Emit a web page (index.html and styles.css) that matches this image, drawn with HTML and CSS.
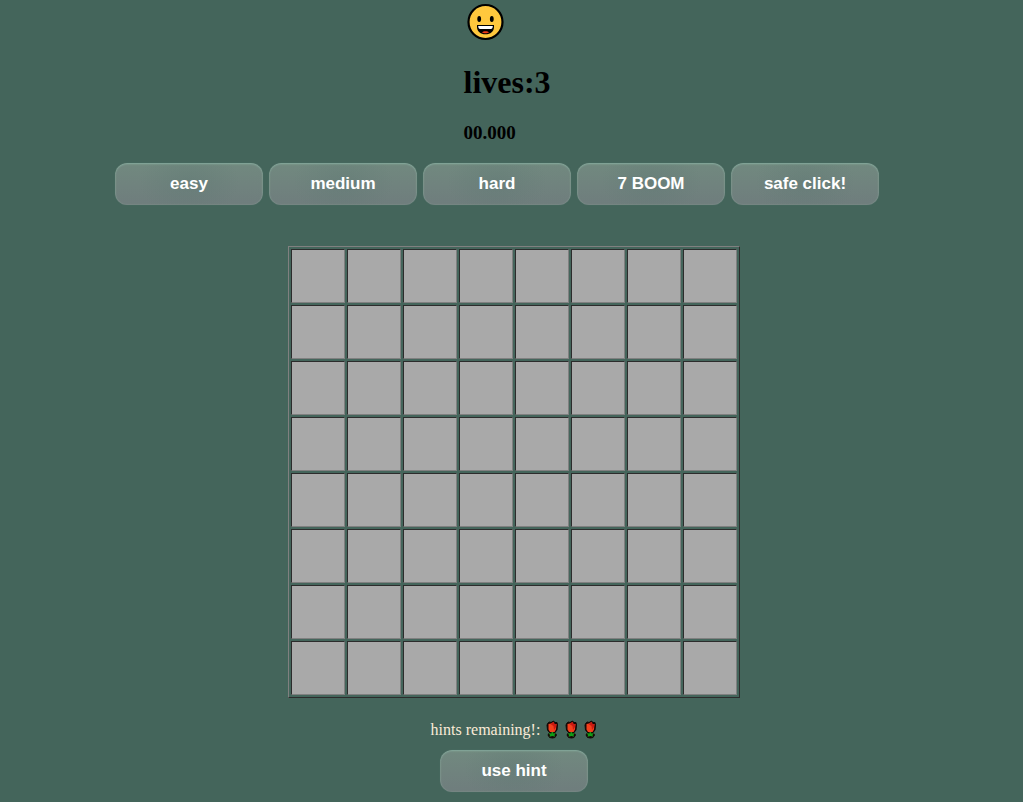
FILE: index.html
```
<!DOCTYPE html>
<html lang="en">
<head>
<meta charset="utf-8">
<title>Minesweeper</title>
<link rel="stylesheet" href="styles.css">
</head>
<body>
<svg class="symbols" aria-hidden="true">
  <symbol id="rose" viewBox="0 0 13 19">
    <path d="M3.500 2 5 2.500 7.500 1 9 2.500 11 2.500 11.500 5 11 10 9 12.500 10.500 15 9 17.500 6.500 18 3.500 17.500 2 15 3.500 12.500 1.500 10 1 5 2 3Z" fill="#140806" stroke="#140806" stroke-linejoin="round"/>
    <path d="M2.500 4 5 3.500 7.500 2 8.500 4 10.500 4 10 9.500 8.500 12H4L2.500 9.500Z" fill="#f2401c"/>
    <path d="M4.500 4 7.500 2 8.500 4 10.500 4 10 7 8 10 7.500 6Z" fill="#c91a12"/>
    <path d="M5.500 12H7.200V13.500L10 13 8.500 15 9 16.800 6.500 16 3.500 16.800 4 15 2.500 13 5.500 13.500Z" fill="#139a17"/>
  </symbol>
</svg>
<header class="status">
  <button class="face" type="button" aria-label="Restart game">
    <svg viewBox="0 0 38 38" width="38" height="38" aria-hidden="true">
      <circle cx="18.500" cy="19" r="17" fill="#ffc83d" stroke="#000" stroke-width="2.200"/>
      <ellipse cx="12.200" cy="16" rx="1.900" ry="3" fill="#000"/>
      <ellipse cx="24.800" cy="16" rx="1.900" ry="3" fill="#000"/>
      <path d="M10 22H27V24C27 28.500 23.500 31.300 18.500 31.300S10 28.500 10 24Z" fill="#000"/>
      <path d="M11.200 23H25.800C25.800 25 25 26 24 26H13C12 26 11.200 25 11.200 23Z" fill="#fff"/>
      <path d="M15 29.500C16 27.800 21 27.800 22 29.500 20.500 30.500 16.500 30.500 15 29.500Z" fill="#f03a17"/>
    </svg>
  </button>
  <h1 class="lives">lives:3</h1>
  <h3 class="timer">00.000</h3>
</header>
<nav class="levels">
  <button class="btn" type="button">easy</button>
  <button class="btn" type="button">medium</button>
  <button class="btn" type="button">hard</button>
  <button class="btn" type="button">7 BOOM</button>
  <button class="btn" type="button">safe click!</button>
</nav>
<main class="game">
  <table class="board" aria-label="Game board">
    <tbody>
      <tr><td></td><td></td><td></td><td></td><td></td><td></td><td></td><td></td></tr>
      <tr><td></td><td></td><td></td><td></td><td></td><td></td><td></td><td></td></tr>
      <tr><td></td><td></td><td></td><td></td><td></td><td></td><td></td><td></td></tr>
      <tr><td></td><td></td><td></td><td></td><td></td><td></td><td></td><td></td></tr>
      <tr><td></td><td></td><td></td><td></td><td></td><td></td><td></td><td></td></tr>
      <tr><td></td><td></td><td></td><td></td><td></td><td></td><td></td><td></td></tr>
      <tr><td></td><td></td><td></td><td></td><td></td><td></td><td></td><td></td></tr>
      <tr><td></td><td></td><td></td><td></td><td></td><td></td><td></td><td></td></tr>
    </tbody>
  </table>
  <div class="hints">
    <span>hints remaining!:</span>
    <svg class="rose" aria-hidden="true"><use href="#rose"/></svg>
    <svg class="rose" aria-hidden="true"><use href="#rose"/></svg>
    <svg class="rose" aria-hidden="true"><use href="#rose"/></svg>
  </div>
  <button class="btn" type="button">use hint</button>
</main>
</body>
</html>
```
FILE: styles.css
```
body {
  margin: 0;
  background: #44655b;
  color: #000;
  font-family: "Liberation Serif", "Times New Roman", serif;
}

.symbols {
  display: none;
}

.status {
  display: flex;
  flex-direction: column;
  align-items: flex-start;
  width: 96px;
  margin: 0 auto;
  padding-top: 3px;
}

.face {
  margin-left: 3px;
  padding: 0;
  border: 0;
  background: none;
  line-height: 0;
  cursor: pointer;
}

.lives {
  margin: 23px 0 22px;
  font-size: 32px;
  line-height: 36px;
}

.timer {
  margin: 0;
  font-size: 19px;
  line-height: 22px;
}

.levels {
  display: flex;
  justify-content: center;
  gap: 6px;
  padding: 19px 29px 0 0;
}

.btn {
  width: 148px;
  height: 42px;
  padding: 0;
  border: 0;
  border-radius: 12px;
  background:
    radial-gradient(ellipse 50px 36px at 50% 45%, rgba(90, 118, 112, 0.35), transparent),
    linear-gradient(#71897f, #6f7d7d);
  box-shadow: inset 0 1px 2px #84aa9c, inset 0 0 2px #87948f, 0 0 1px #587a70;
  color: #fff;
  font: bold 17px/20px "Liberation Sans", Arial, sans-serif;
  cursor: pointer;
}

.game {
  display: flex;
  flex-direction: column;
  align-items: center;
  padding: 41px 0 10px 5px;
}

.board {
  border: 1px solid;
  border-color: #808080 #2c2c2c #2c2c2c #808080;
  border-spacing: 2px;
}

.board td {
  box-sizing: border-box;
  width: 54px;
  height: 54px;
  padding: 0;
  border: 1px solid;
  border-color: #2c2c2c #808080 #808080 #2c2c2c;
  background: #a9a9a9;
}

.hints {
  display: flex;
  align-items: center;
  gap: 6px;
  padding: 22px 0 11px;
  color: #faebd7;
  font-size: 16px;
  line-height: 19px;
}

.rose {
  width: 13px;
  height: 19px;
}
```
